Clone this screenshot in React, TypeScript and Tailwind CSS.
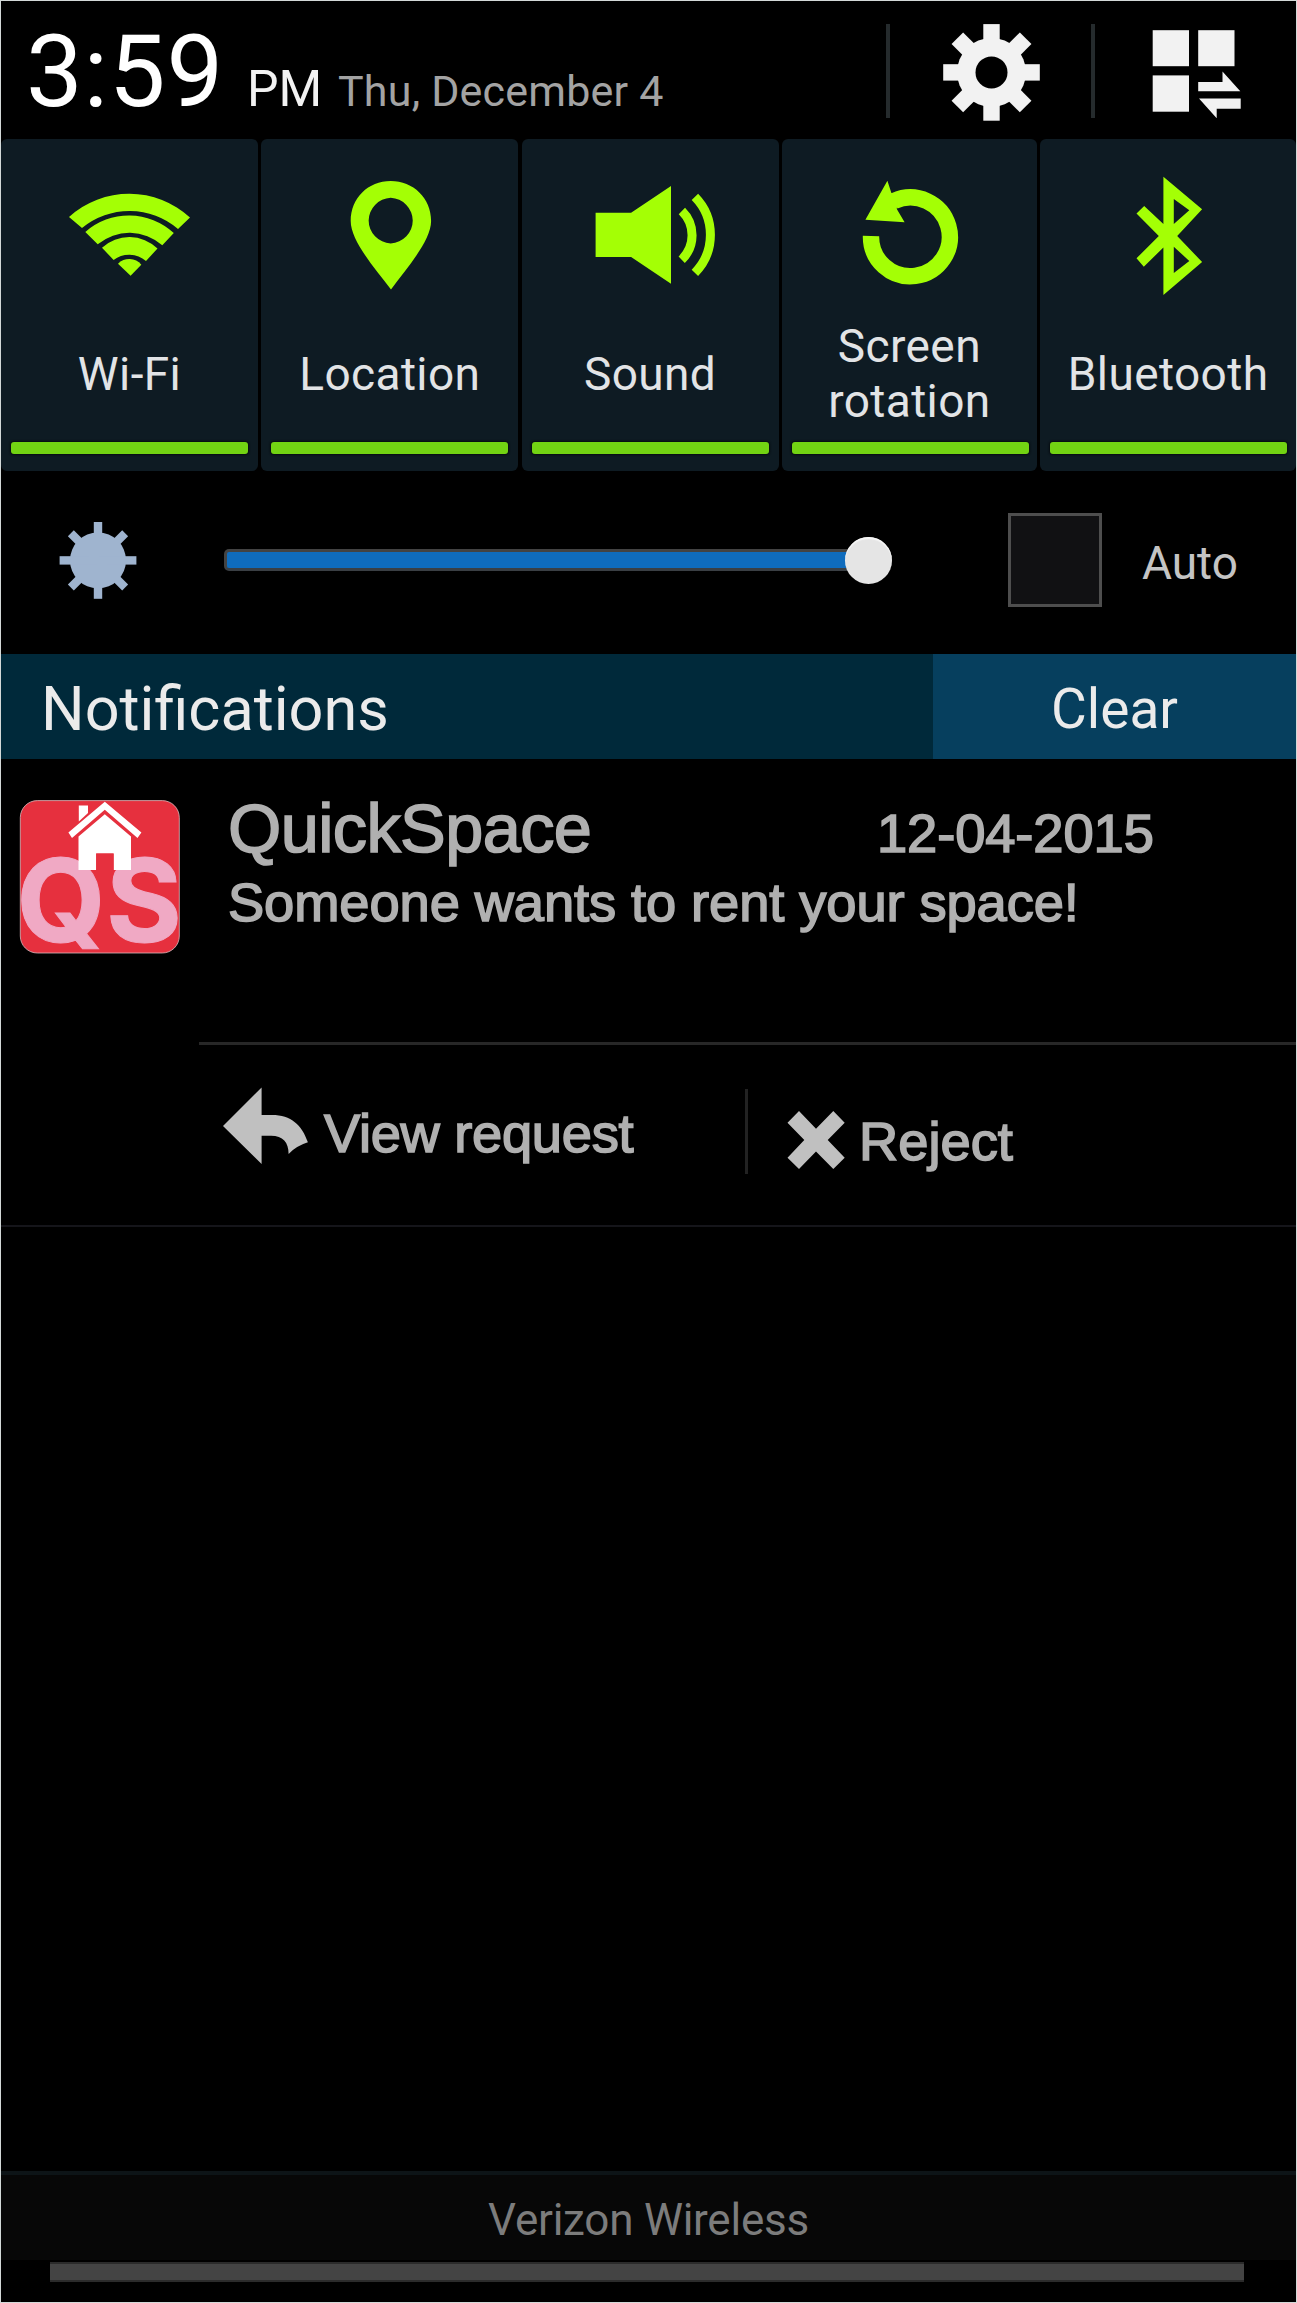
import type { ReactNode } from "react";

const LIME = "#a4ff05";

function WifiIcon() {
  return (
    <svg viewBox="1 139 256 180" className="h-[180px] w-[256px]" fill={LIME}>
      <path d="M69 217A89.6 89.6 0 0 1 190 217.5L178 229A74.6 74.6 0 0 0 82 228Z" />
      <path d="M85.3 232A66 66 0 0 1 173.8 233L162.3 245.3A49.5 49.5 0 0 0 97.7 244.3Z" />
      <path d="M102 247.7A40.5 40.5 0 0 1 157.5 248.5L146 261A25.5 25.5 0 0 0 113.6 260Z" />
      <path d="M118 263.8A15.4 15.4 0 0 1 141.3 264.7L130.6 275.8Z" />
    </svg>
  );
}

function PinIcon() {
  return (
    <svg viewBox="261.3 139 256 180" className="h-[180px] w-[256px]" fill={LIME}>
      <path
        fillRule="evenodd"
        d="M391 181C413.5 181 431.4 198 431.4 221C431.4 241 407 268 391.3 289.5C375 268 351 241 351 221C351 198 368.5 181 391 181ZM391 197.7A23.6 22.9 0 0 0 391 243.4A23.6 22.9 0 0 0 391 197.7Z"
      />
    </svg>
  );
}

function SoundIcon() {
  return (
    <svg viewBox="521.6 139 256 180" className="h-[180px] w-[256px]" fill={LIME}>
      <path d="M595.2 212.7H630.7L670.6 186V283.7L630.7 257H595.2Z" />
      <g fill="none" stroke={LIME} strokeWidth="9">
        <path d="M681.5 211A34 34 0 0 1 681.3 259.7" />
        <path d="M694.5 196.8A54.3 54.3 0 0 1 694.5 272.8" />
      </g>
    </svg>
  );
}

function RotateIcon() {
  return (
    <svg viewBox="781.9 139 256 180" className="h-[180px] w-[256px]" fill={LIME}>
      <path
        d="M870.9 236A39.4 39.4 0 1 0 894 201"
        fill="none"
        stroke={LIME}
        strokeWidth="16.4"
      />
      <path d="M887.3 180.7L865.3 219.7L904.5 222.3L896.7 209L898 196L891.3 193Z" />
    </svg>
  );
}

function BluetoothIcon() {
  return (
    <svg viewBox="1040.2 139 256 180" className="h-[180px] w-[256px]" fill={LIME}>
      <path
        fillRule="evenodd"
        d="M1163.6 176.7L1202.3 209.3L1177.4 236L1202.3 262L1163.6 295V247.5L1144 266.7L1136.7 258.3L1159 236L1136.7 213.5L1144.4 206L1163.6 224ZM1174 199V224L1189.5 210.3ZM1174 246.7V273L1189.5 261Z"
      />
    </svg>
  );
}

function GearIcon() {
  return (
    <svg viewBox="890 1 201 138" className="h-[138px] w-[201px]">
      <g fill="#f2f2f2">
        <circle cx="991.5" cy="72.4" r="34.5" />
        {[0, 45, 90, 135].map((a) => (
          <rect key={a} x="983.3" y="24.1" width="16.4" height="96.6" transform={`rotate(${a} 991.5 72.4)`} />
        ))}
      </g>
      <circle cx="991.5" cy="72.4" r="16" fill="#000" />
    </svg>
  );
}

function PanelsIcon() {
  return (
    <svg viewBox="1095 1 201 138" className="h-[138px] w-[201px]" fill="#f2f2f2">
      <rect x="1152.7" y="30.2" width="36.3" height="36" />
      <rect x="1198.2" y="30.2" width="36.3" height="36" />
      <rect x="1152.7" y="75.4" width="36.3" height="36.3" />
      <path d="M1198.2 82H1222.5V71.5L1240.3 91.3H1198.2Z" />
      <path d="M1199 98.6H1240.7V108.7H1216.7V118.3Z" />
    </svg>
  );
}

function SunIcon() {
  return (
    <svg viewBox="1 471 223 179" className="h-[179px] w-[223px]" fill="#9fb4cf">
      <circle cx="98" cy="560.4" r="28" />
      {[0, 45, 90, 135].map((a) => (
        <rect key={a} x="93.8" y="522" width="8.4" height="76.8" transform={`rotate(${a} 98 560.4)`} />
      ))}
    </svg>
  );
}

function AppLogo() {
  return (
    <svg viewBox="20 800 160 154" className="h-[154px] w-[160px] overflow-visible">
      <rect x="20.3" y="800.6" width="159" height="152.4" rx="17" fill="#e6303e" stroke="#d9b9bd" strokeWidth="0.8" />
      <g
        fill="#f0a9c4"
        stroke="#f0a9c4"
        strokeWidth="1"
        className="font-[Inter,sans-serif] text-[115px] font-bold"
      >
        <text x="16.5" y="942" textLength="89" lengthAdjust="spacingAndGlyphs">
          Q
        </text>
        <text x="106" y="942" textLength="76" lengthAdjust="spacingAndGlyphs">
          S
        </text>
      </g>
      <g fill="#fff">
        <path d="M78.8 805.5H88V813L78.8 821.5Z" />
        <path d="M104.8 801.7L141.4 832.5L137.5 838L104.8 809.8L72 838L68.4 832.5Z" />
        <path d="M104.8 814.3L131 836.5V870H113.6V853.5H96.2V870H78.5V836.5Z" />
      </g>
      <rect x="96.2" y="853.5" width="17.4" height="17" fill="#e6303e" />
    </svg>
  );
}

function ReplyIcon() {
  return (
    <svg viewBox="222 1087 88 79" className="h-[79px] w-[88px] shrink-0" fill="#c0c0c0">
      <path d="M223 1127L261.6 1088.5V1116H272C291 1116 302 1126 307.9 1143.3Q296 1147 288.6 1155C288.6 1143 283 1136.7 271 1136.7H261.6V1165Z" />
    </svg>
  );
}

function CrossIcon() {
  return (
    <svg viewBox="788 1110 58 60" className="h-[60px] w-[58px]" fill="#c0c0c0">
      <path d="M800 1111L817 1128.7L834.3 1111L845.7 1122.7L828.7 1140L845.7 1157.7L834.3 1169L817 1151.5L800 1169L788.5 1157.7L805.3 1140L788.5 1122.7Z" />
    </svg>
  );
}

function Tile({ label, children }: { label: ReactNode; children: ReactNode }) {
  return (
    <button className="flex h-[332px] flex-col overflow-hidden rounded-[6px] bg-[#0e1b23]">
      {children}
      <span className="flex h-[110px] w-full items-center justify-center text-center text-[46px] leading-[55px] tracking-[0.4px] text-[#e2e4e6]">
        {label}
      </span>
      <span className="mt-[13px] ml-[10px] h-3 w-[237px] rounded-[3px] bg-[#72d313] shadow-[0_0_2px_1px_#060c10]" />
    </button>
  );
}

export default function App() {
  return (
    <div className="flex h-[2303px] w-[1297px] flex-col overflow-hidden border border-[#d3d9d8] bg-black font-[Roboto,sans-serif]">
      <header className="flex h-[138px] shrink-0">
        <div className="flex w-[885px] items-baseline whitespace-nowrap pt-[21px] pl-[25px]">
          <span className="w-[221px] text-[101px] leading-[100px] tracking-[0.8px] text-white">3:59</span>
          <span className="w-[91px] text-[50px] leading-[60px] text-[#f2f2f2]">PM</span>
          <span className="text-[43px] leading-[60px] tracking-[0.2px] text-[#a3a3a3]">Thu, December 4</span>
        </div>
        <div className="mt-[23px] h-[94px] w-1 bg-[#252b2d]" />
        <GearIcon />
        <div className="mt-[23px] h-[94px] w-1 bg-[#252b2d]" />
        <PanelsIcon />
      </header>

      <section className="grid shrink-0 grid-cols-[257px_257px_257px_255px_1fr] gap-[3.3px]">
        <Tile label="Wi-Fi"><WifiIcon /></Tile>
        <Tile label="Location"><PinIcon /></Tile>
        <Tile label="Sound"><SoundIcon /></Tile>
        <Tile label={<>Screen<br />rotation</>}><RotateIcon /></Tile>
        <Tile label="Bluetooth"><BluetoothIcon /></Tile>
      </section>

      <section className="flex h-[183px] shrink-0 items-center pb-[5px]">
        <SunIcon />
        <div className="relative h-[22px] w-[668px]">
          <div className="h-full w-[650px] rounded-[5px] border-[3px] border-[#434343] border-b-[#3a3f44] bg-[#0f6cbd]" />
          <div className="absolute top-[-12px] right-0 h-[47px] w-[47px] rounded-full bg-[#e5e5e5] shadow-[inset_0_2px_1px_#f6f6f6]" />
        </div>
        <div className="ml-[116px] h-[94px] w-[94px] border-[3px] border-[#4e4e4e] bg-[#111113]" />
        <span className="pt-[5px] pl-[40px] text-[46px] leading-[56px] text-[#c4c4c4]">Auto</span>
      </section>

      <section className="flex h-[105px] shrink-0 text-[#ebebeb]">
        <h1 className="w-[932px] bg-[#00293a] pl-10 text-[61.2px] leading-[110px] font-normal">Notifications</h1>
        <button className="flex-1 bg-[#063f5e] text-center text-[55px] leading-[110px]">Clear</button>
      </section>

      <article className="flex h-[468px] shrink-0 flex-col border-b-2 border-[#15151a] font-['Liberation_Sans',Arial,sans-serif] text-[54.3px] text-[#b0b0b0] [-webkit-text-stroke:1.6px_#b0b0b0]">
        <div className="flex h-[283px] pt-[41px] pl-[19px]">
          <AppLogo />
          <div className="ml-[48px] w-[930px]">
            <div className="flex h-[70px] items-baseline">
              <h2 className="w-[649px] text-[68.5px] leading-[58px] font-normal tracking-[-0.6px]">QuickSpace</h2>
              <span className="leading-[58px] tracking-[-0.1px]">12-04-2015</span>
            </div>
            <p className="leading-[66px] tracking-[-0.1px] whitespace-nowrap">Someone wants to rent your space!</p>
          </div>
        </div>
        <div className="ml-[198px] h-[3px] bg-[#272727]" />
        <div className="flex whitespace-nowrap pt-[41px] pl-[221px]">
          <ReplyIcon />
          <span className="w-[435px] shrink-0 pt-[18px] pl-[14px] leading-[60px] tracking-[-0.3px]">View request</span>
          <div className="mt-[3px] h-[85px] w-[3px] shrink-0 bg-[#222]" />
          <div className="mt-[24px] ml-[39px] shrink-0"><CrossIcon /></div>
          <span className="pt-[26px] pl-[14px] leading-[60px]">Reject</span>
        </div>
      </article>

      <footer className="mt-auto shrink-0">
        <div className="h-[89px] border-t-4 border-[#0d1417] bg-[#070707] text-center text-[44px] leading-[90px] tracking-[-0.25px] text-[#7c7c7c]">
          Verizon Wireless
        </div>
        <div className="mt-[2px] mr-[52px] mb-5 ml-[49px] h-5 border-y-2 border-[#2b2b2b] bg-[#444]" />
      </footer>
    </div>
  );
}
